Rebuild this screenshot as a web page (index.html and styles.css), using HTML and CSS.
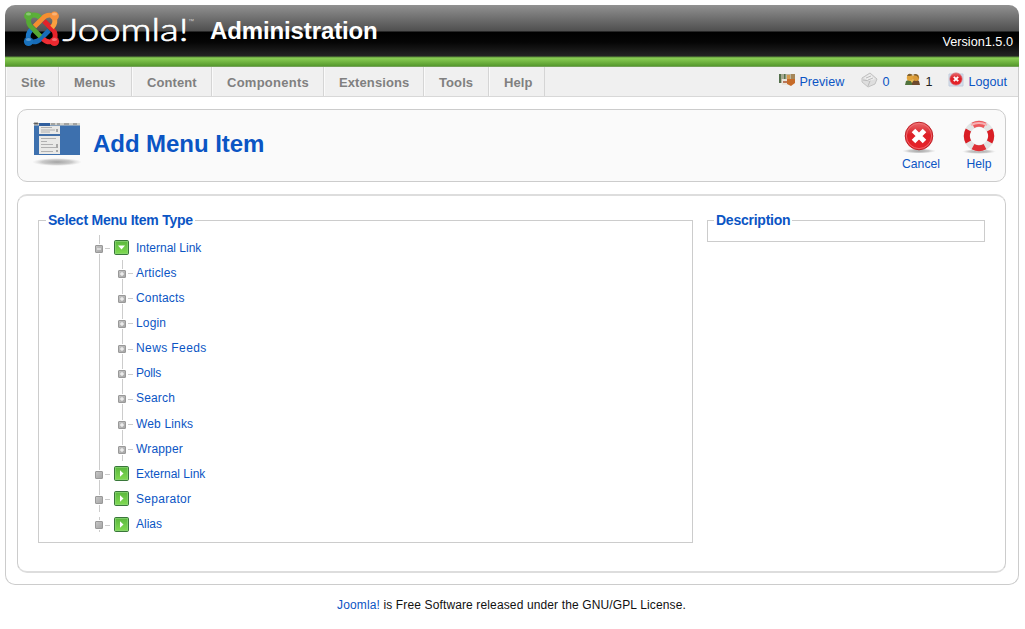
FILE: index.html
```
<!DOCTYPE html>
<html lang="en">
<head>
<meta charset="utf-8">
<title>Joomla! Administration</title>
<link rel="stylesheet" href="styles.css">
</head>
<body>
<svg class="defs" width="0" height="0" aria-hidden="true">
  <defs>
    <linearGradient id="red" x1="0" y1="0" x2="0" y2="1"><stop offset="0" stop-color="#e86a6d"/><stop offset=".45" stop-color="#dd2027"/><stop offset="1" stop-color="#e8232a"/></linearGradient>
    <linearGradient id="green" x1="0" y1="0" x2="0" y2="1"><stop offset="0" stop-color="#58b63c"/><stop offset="1" stop-color="#82dc52"/></linearGradient>
    <linearGradient id="grey" x1="0" y1="0" x2="1" y2="1"><stop offset="0" stop-color="#c8c8c8"/><stop offset="1" stop-color="#a4a4a4"/></linearGradient>
    <radialGradient id="shade"><stop offset="0" stop-color="#999" stop-opacity=".9"/><stop offset=".6" stop-color="#aaa" stop-opacity=".6"/><stop offset="1" stop-color="#ccc" stop-opacity="0"/></radialGradient>
    <symbol id="open" viewBox="0 0 15 15"><rect x=".5" y=".5" width="14" height="14" rx="1.2" fill="url(#green)" stroke="#39763a"/><rect x="1.5" y="1.5" width="12" height="12" fill="none" stroke="#8bd477" stroke-opacity=".7"/><path d="M4 5.600h7L7.500 9.400z" fill="#fff"/></symbol>
    <symbol id="closed" viewBox="0 0 15 15"><rect x=".5" y=".5" width="14" height="14" rx="1.2" fill="url(#green)" stroke="#39763a"/><rect x="1.5" y="1.5" width="12" height="12" fill="none" stroke="#8bd477" stroke-opacity=".7"/><path d="M6 4.200v6.600l3.500-3.300z" fill="#fff"/></symbol>
    <symbol id="leaf" viewBox="0 0 8 8"><rect x=".5" y=".5" width="7" height="7" rx=".5" fill="url(#grey)" stroke="#999"/></symbol>
    <symbol id="plus" viewBox="0 0 8 8"><rect x=".5" y=".5" width="7" height="7" rx=".5" fill="url(#grey)" stroke="#999"/><path d="M2 4h4M4 2v4" stroke="#fff"/></symbol>
    <symbol id="minus" viewBox="0 0 8 8"><rect x=".5" y=".5" width="7" height="7" rx=".5" fill="url(#grey)" stroke="#999"/><path d="M2 4h4" stroke="#fff"/></symbol>
  </defs>
</svg>
<div class="page">
  <header class="header">
    <svg class="logo" width="176" height="40" viewBox="0 0 176 40">
      <g fill="none" stroke-width="4.900" stroke-linejoin="round">
        <path d="M31 8Q24 5.500 20 10L11.500 18.500" stroke="#f58f30"/>
        <path d="M31 33Q34 25.500 29.500 21.500L21 13" stroke="#e4222a"/>
        <path d="M6 33Q13 35.500 17.500 31L26 22.500" stroke="#176cb8"/>
        <path d="M6 8Q4 15 8.500 19.500L17.500 28.500" stroke="#55a834"/>
        <path d="M6 8Q13 5.500 17 9.500" stroke="#5bb038"/>
        <path d="M31 8Q33.500 15 29 19.500" stroke="#f9a03f"/>
        <path d="M31 33Q24.500 35.500 20 31" stroke="#ee2d33"/>
        <path d="M6 33Q3.500 26.500 8 22" stroke="#1b77c6"/>
      </g>
      <circle cx="5.500" cy="8" r="4.400" fill="#59ae38"/><circle cx="31.500" cy="8" r="4.400" fill="#f7923d"/><circle cx="31.500" cy="33.500" r="4.600" fill="#ed2930"/><circle cx="5.500" cy="33.500" r="4.600" fill="#1972bd"/>
      <g fill="#fff" fill-opacity=".3"><ellipse cx="5.500" cy="6" rx="2.600" ry="1.600"/><ellipse cx="31.500" cy="6" rx="2.600" ry="1.600"/><ellipse cx="31.500" cy="31.500" rx="2.600" ry="1.600"/><ellipse cx="5.500" cy="31.500" rx="2.600" ry="1.600"/></g>
      <text class="wordmark" x="39.500" y="32.500" textLength="126" lengthAdjust="spacingAndGlyphs">Joomla!</text>
      <text class="tm" x="165" y="15">™</text>
    </svg>
    <span class="title">Administration</span>
    <span class="version">Version1.5.0</span>
  </header>
  <div class="bar">
    <nav class="menu">
      <a class="m-site">Site</a><a class="m-menus">Menus</a><a class="m-content">Content</a><a class="m-components">Components</a><a class="m-extensions">Extensions</a><a class="m-tools">Tools</a><a class="m-help">Help</a>
    </nav>
    <div class="status">
      <a class="s-preview"><svg width="16" height="14" viewBox="0 0 16 14"><path d="M0 1h16v9H0z" fill="#bdb8a2"/><path d="M0 1h2v9H0zM5 1h1.500v5H5z" fill="#54704b"/><path d="M2 1h3v5H2z" fill="#a5aa91"/><path d="M8 2h3v4H8z" fill="#d39a4f"/><path d="M12 1h4v5h-4z" fill="#a5875a"/><path d="M3 6h5v6H3z" fill="#e9e4db"/><path d="M8 6h8v4l-4 3-4-2z" fill="#c66b29"/><path d="M4 8h4v2H4z" fill="#b9775a"/></svg>Preview</a>
      <a class="s-mail"><svg width="17" height="16" viewBox="0 0 17 16"><path d="M1 6 9 1l7 6-2 5-7 3-6-5z" fill="#dedede" stroke="#c2c2c2"/><path d="m2 8 7 1 1-5M7 14l2-5" fill="none" stroke="#bbb"/><path d="m3 6 6-4 5 5-6 2z" fill="#eee"/><path d="m5 6 5-2m-3 4 5-2" stroke="#bbb"/></svg>0</a>
      <span class="s-users"><svg width="15" height="13" viewBox="0 0 15 13"><path d="M0 12 1 8l5-2 3 6z" fill="#51733d"/><path d="M7 12V8l4-2 3 2 1 4z" fill="#6d492d"/><circle cx="5" cy="4.800" r="3.200" fill="#e0a43d"/><circle cx="11" cy="4.800" r="3.200" fill="#d99a38"/><path d="M2 3q1-3 4-2l2 1-3 1zM8 2q2-2 5 0l1 4-2-3z" fill="#80602f"/><path d="m5 7 2 3 2-3z" fill="#e4bb55"/></svg>1</span>
      <a class="s-logout"><svg width="16" height="16" viewBox="0 0 16 16"><path d="M1 2h14v12H1z" fill="#d6deeb" stroke="#c2cddd"/><circle cx="8" cy="7" r="6.100" fill="url(#red)" stroke="#d86065" stroke-width=".7"/><path d="m5.800 4.800 4.400 4.400m0-4.400L5.800 9.200" stroke="#fff" stroke-width="1.900"/></svg>Logout</a>
    </div>
  </div>
  <main class="content">
    <section class="toolbar">
      <svg width="48" height="48" viewBox="0 0 48 48"><ellipse cx="24" cy="40" rx="25" ry="4" fill="url(#shade)"/><path d="M1 1h46v32H1z" fill="#3d70ae"/><path d="M1 1h46v2.500H1z" fill="#d1d1cb"/><path d="M1 1h4v1H1zM18 2h4M24 2h3M31 2h5M40 2h4" stroke="#777"/><path d="M6 1h11v3H6z" fill="#315f9e"/><path d="M6 4h21v28H6z" fill="#e9e9e7"/><path d="M6 12h22v2H6z" fill="#426fa8"/><path d="M8 5.500h11M8 8h14M8 10h9M8 16.500h15M8 19.500h6M8 22.500h12M8 25.500h15M8 29.500h12" stroke="#b0b0b0"/><path d="M24 7v3M24 22v4M24 28v2" stroke="#666"/></svg>
      <h1>Add Menu Item</h1>
      <div class="actions">
        <a><svg width="36" height="36" viewBox="0 0 36 36"><ellipse cx="18" cy="32" rx="17" ry="2.500" fill="url(#shade)"/><circle cx="18" cy="17" r="13.800" fill="url(#red)" stroke="#bd2329"/><circle cx="18" cy="17" r="12.600" fill="none" stroke="#f2777a" stroke-width=".8"/><path d="m12.500 11.500 11 11m0-11-11 11" stroke="#fff" stroke-width="5"/></svg><span class="cancel">Cancel</span></a>
        <a><svg width="36" height="36" viewBox="0 0 36 36"><ellipse cx="18" cy="32.500" rx="17" ry="2.500" fill="url(#shade)"/><circle cx="18" cy="17" r="12.200" fill="none" stroke="#e2e4e4" stroke-width="6.400"/><g fill="none" stroke-width="6"><path d="M12 6.400Q18 3.200 24 6.400" stroke="#ed595c"/><path d="M28.600 11Q31.800 17 28.600 23" stroke="#d91e25"/><path d="M12 27.600Q18 30.800 24 27.600" stroke="#df3036"/><path d="M7.400 11Q4.200 17 7.400 23" stroke="#d91e25"/></g><path d="M10 6q8-4 16 0" fill="none" stroke="#f7b1b3" stroke-width="2"/></svg>Help</a>
      </div>
    </section>
    <section class="panel">
      <fieldset class="types">
        <legend>Select Menu Item Type</legend>
        <ul class="tree">
          <li class="row open"><svg class="node"><use href="#minus"/></svg><svg class="badge"><use href="#open"/></svg><a>Internal Link</a></li>
          <li class="branch"><ul>
            <li class="row"><svg class="node"><use href="#plus"/></svg><a>Articles</a></li>
            <li class="row"><svg class="node"><use href="#plus"/></svg><a>Contacts</a></li>
            <li class="row"><svg class="node"><use href="#plus"/></svg><a>Login</a></li>
            <li class="row"><svg class="node"><use href="#plus"/></svg><a class="wide">News Feeds</a></li>
            <li class="row"><svg class="node"><use href="#plus"/></svg><a class="tight">Polls</a></li>
            <li class="row"><svg class="node"><use href="#plus"/></svg><a>Search</a></li>
            <li class="row"><svg class="node"><use href="#plus"/></svg><a>Web Links</a></li>
            <li class="row"><svg class="node"><use href="#plus"/></svg><a>Wrapper</a></li>
          </ul></li>
          <li class="row"><svg class="node"><use href="#leaf"/></svg><svg class="badge"><use href="#closed"/></svg><a>External Link</a></li>
          <li class="row"><svg class="node"><use href="#leaf"/></svg><svg class="badge"><use href="#closed"/></svg><a class="wide">Separator</a></li>
          <li class="row last"><svg class="node"><use href="#leaf"/></svg><svg class="badge"><use href="#closed"/></svg><a>Alias</a></li>
        </ul>
      </fieldset>
      <fieldset class="description"><legend>Description</legend></fieldset>
    </section>
  </main>
</div>
<footer class="footer"><a>Joomla!</a> is Free Software released under the GNU/GPL License.</footer>
</body>
</html>
```
FILE: styles.css
```
* { box-sizing: border-box; }
body { margin: 0; padding: 5px 6px 0 5px; background: #fff; color: #222; font: 12px/16px "Liberation Sans", Arial, sans-serif; }
svg { display: block; flex: none; }
.defs { position: absolute; }
a { color: #0b55c4; }
.page { height: 580px; border: 1px solid #ccc; border-width: 0 1px 1px; border-radius: 10px; }
.header { display: flex; height: 62px; margin: 0 -1px; padding-left: 18px; color: #fff; border-radius: 10px 10px 0 0; background: linear-gradient(#919191 0, #4f4f4f 26px, #000 27px, #050505 37px, #242424 51px, #5b8f3a 52px, #8bcf55 53px, #56992d 61px, #92a986 62px); }
.logo { margin-top: 3px; overflow: visible; }
.wordmark { font: 300 31.5px Lato, sans-serif; fill: #fff; stroke: #fff; stroke-width: .7px; }
.tm { font: 6px "Liberation Sans", sans-serif; fill: #ccc; }
.title { margin: 12px 0 0 11px; font: bold 24px/28px "Liberation Sans", sans-serif; letter-spacing: -.12px; }
.version { margin: 29px 6px 0 auto; font-size: 12.7px; }
.bar { display: flex; justify-content: space-between; height: 30px; background: #f0f0f0; border-bottom: 1px solid #d8d8d8; }
.menu { display: flex; }
.menu a { padding-left: 15px; border-right: 1px solid #d5d5d5; box-shadow: inset 1px 0 #fafafa; color: #808080; font: bold 13px/31px "Liberation Sans", sans-serif; letter-spacing: .1px; }
.menu .m-components { letter-spacing: .25px; }
.m-site { width: 53px; }
.m-menus { width: 73px; }
.m-content { width: 80px; }
.m-components { width: 112px; }
.m-extensions { width: 100px; }
.m-tools { width: 65px; }
.m-help { width: 56px; }
.status { display: flex; padding-right: 11px; font-size: 12.6px; }
.status > * { display: flex; align-items: flex-start; gap: 4px; line-height: 30px; }
.status svg { margin-top: 6px; }
.status .s-mail svg { margin-top: 5px; }
.status .s-logout svg { margin-top: 5px; }
.s-preview { width: 82px; }
.s-mail { width: 44px; }
.status .s-users { width: 43px; gap: 5px; }
.content { padding: 12px 12px 0 11px; }
.toolbar { display: flex; height: 73px; padding: 12px 0 0 15px; border: 1px solid #ccc; border-radius: 10px; background: #fafafa; }
.toolbar h1 { margin: 8px 0 0 12px; color: #0b55c4; font-size: 24px; line-height: 28px; letter-spacing: -.05px; }
.actions { display: flex; margin: -4px -4px 0 auto; }
.actions a { display: flex; flex-direction: column; align-items: center; width: 60px; font-size: 12.2px; line-height: 16px; gap: 1px; }
.actions svg { margin-top: 1px; }
.cancel { padding-left: 4px; }
.panel { display: flex; align-items: flex-start; justify-content: space-between; height: 379px; margin-top: 12px; padding: 17px 20px; border: 1px solid #ccc; border-top: 2px solid #ddd; border-bottom: 2px solid #ddd; border-radius: 10px; }
fieldset { min-width: 0; margin: 0; padding: 0; border: 1px solid #ccc; }
legend { margin-left: 7px; padding: 0 2px; color: #0b55c4; font-size: 14px; line-height: 15px; font-weight: bold; letter-spacing: -.24px; }
.types { width: 655px; height: 330px; }
.description { width: 278px; height: 29px; }
.description legend { margin-left: 6px; }
.tree, .tree ul { list-style: none; margin: 0; padding: 0; }
.tree { padding-left: 56px; margin-top: 7px; }
.row { display: flex; align-items: center; height: 25.15px; position: relative; }
.row::before { content: ""; position: absolute; left: 4px; top: 0; width: 1px; height: 100%; background: #ccc; }
.row::after { content: ""; position: absolute; left: 10px; top: 13px; width: 5px; height: 1px; background: #ccc; }
.last::before { top: 5px; height: 15px; }
.node { position: relative; width: 8px; height: 8px; margin-top: 2px; box-shadow: 0 0 0 1px #fff; }
.badge { width: 15px; height: 15px; margin-left: 11px; }
.row a { margin-left: 7px; }
.row .wide { letter-spacing: .28px; }
.branch { padding-left: 23px; background: linear-gradient(#ccc, #ccc) 4px 0 / 1px 100% no-repeat; }
.branch .row a { margin-left: 10px; letter-spacing: .16px; }
.branch .row .wide { letter-spacing: .4px; }
.branch .row .tight { letter-spacing: -.2px; }
.footer { margin-top: 12px; padding-right: 1px; text-align: center; color: #111; letter-spacing: .13px; }
```
